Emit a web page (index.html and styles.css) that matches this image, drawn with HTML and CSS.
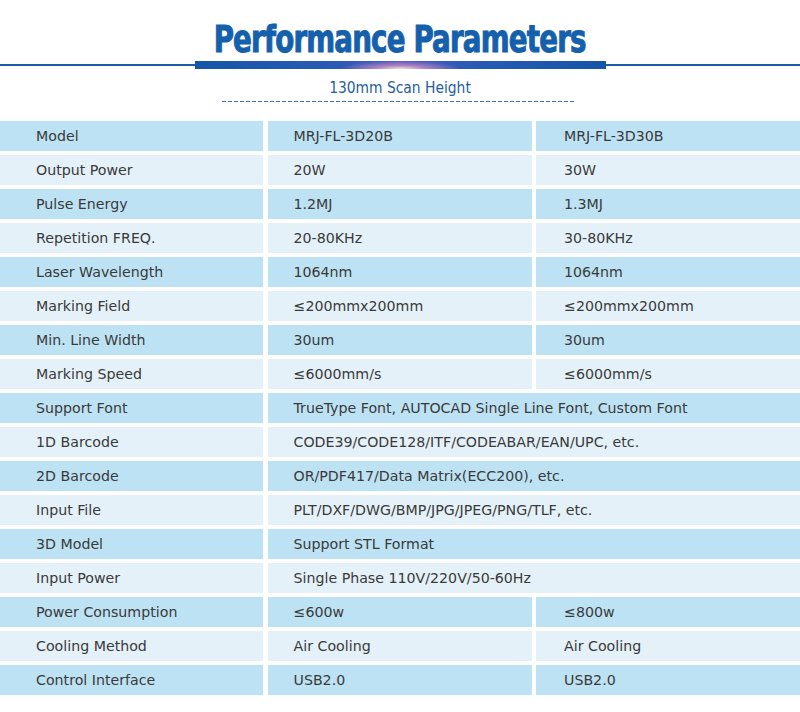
FILE: index.html
```html
<!DOCTYPE html>
<html>
<head>
<meta charset="utf-8">
<link rel="stylesheet" href="styles.css">
</head>
<body>
<div class="header">
  <h1 class="title"><span class="title-text">Performance Parameters</span></h1>
  <div class="rule">
    <div class="rule-line"></div>
    <div class="rule-bar"></div>
    <div class="rule-line"></div>
  </div>
  <div class="subtitle">130mm Scan Height</div>
  <div class="dashes"></div>
</div>
<div class="spec">
  <div class="row dark"><div class="cell label">Model</div><div class="cell">MRJ-FL-3D20B</div><div class="cell third">MRJ-FL-3D30B</div></div>
  <div class="row light"><div class="cell label">Output Power</div><div class="cell">20W</div><div class="cell third">30W</div></div>
  <div class="row dark"><div class="cell label">Pulse Energy</div><div class="cell">1.2MJ</div><div class="cell third">1.3MJ</div></div>
  <div class="row light"><div class="cell label">Repetition FREQ.</div><div class="cell">20-80KHz</div><div class="cell third">30-80KHz</div></div>
  <div class="row dark"><div class="cell label">Laser Wavelength</div><div class="cell">1064nm</div><div class="cell third">1064nm</div></div>
  <div class="row light"><div class="cell label">Marking Field</div><div class="cell">≤200mmx200mm</div><div class="cell third">≤200mmx200mm</div></div>
  <div class="row dark"><div class="cell label">Min. Line Width</div><div class="cell">30um</div><div class="cell third">30um</div></div>
  <div class="row light"><div class="cell label">Marking Speed</div><div class="cell">≤6000mm/s</div><div class="cell third">≤6000mm/s</div></div>
  <div class="row dark"><div class="cell label">Support Font</div><div class="cell span">TrueType Font, AUTOCAD Single Line Font, Custom Font</div></div>
  <div class="row light"><div class="cell label">1D Barcode</div><div class="cell span">CODE39/CODE128/ITF/CODEABAR/EAN/UPC, etc.</div></div>
  <div class="row dark"><div class="cell label">2D Barcode</div><div class="cell span">OR/PDF417/Data Matrix(ECC200), etc.</div></div>
  <div class="row light"><div class="cell label">Input File</div><div class="cell span">PLT/DXF/DWG/BMP/JPG/JPEG/PNG/TLF, etc.</div></div>
  <div class="row dark"><div class="cell label">3D Model</div><div class="cell span">Support STL Format</div></div>
  <div class="row light"><div class="cell label">Input Power</div><div class="cell span">Single Phase 110V/220V/50-60Hz</div></div>
  <div class="row dark"><div class="cell label">Power Consumption</div><div class="cell">≤600w</div><div class="cell third">≤800w</div></div>
  <div class="row light"><div class="cell label">Cooling Method</div><div class="cell">Air Cooling</div><div class="cell third">Air Cooling</div></div>
  <div class="row dark"><div class="cell label">Control Interface</div><div class="cell">USB2.0</div><div class="cell third">USB2.0</div></div>
</div>
</body>
</html>
```
FILE: styles.css
```css
* { box-sizing: border-box; }
html, body { margin: 0; padding: 0; background: #fff; }
body { width: 800px; font-family: "DejaVu Sans", Verdana, sans-serif; }

.header { height: 121px; padding-top: 18px; }
.title {
  margin: 0;
  height: 41px;
  text-align: center;
  font-family: "DejaVu Sans Condensed", "DejaVu Sans", sans-serif;
  font-stretch: condensed;
  font-weight: bold;
  font-size: 38px;
  line-height: 43px;
  color: #1560ad;
  letter-spacing: -1px;
  white-space: nowrap;
}
.title-text {
  display: inline-block;
  transform: scaleX(0.81);
  transform-origin: center;
  -webkit-text-stroke: 1px #1560ad;
}

.rule { display: flex; align-items: center; height: 9px; margin-top: 1px; }
.rule-line { flex: 1; height: 2px; background: #1a5fa8; }
.rule-bar {
  width: 411px; height: 8px;
  background:
    radial-gradient(ellipse 60px 8px at 50% 100%, rgba(255,230,200,0.95), rgba(230,150,200,0.6) 45%, rgba(120,100,200,0) 100%),
    linear-gradient(90deg, #1455a8 0%, #2a5cb4 35%, #5a5cc0 50%, #2a5cb4 65%, #1455a8 100%);
}
.subtitle {
  margin-top: 10px;
  text-align: center;
  font-family: "DejaVu Sans Condensed", "DejaVu Sans", sans-serif;
  font-size: 15.4px;
  line-height: 18px;
  color: #1f5d9f;
}
.dashes {
  width: 354px; height: 1px; margin: 4px 0 0 222px;
  background: repeating-linear-gradient(90deg, #3b73b3 0 4px, transparent 4px 6px);
}

.spec { display: flex; flex-direction: column; gap: 4px; }
.row {
  display: grid;
  grid-template-columns: 263px 264px 1fr;
  column-gap: 4.5px;
  height: 30px;
}
.cell {
  display: flex; align-items: center;
  padding-left: 26px;
  font-size: 14.2px;
  color: #3a3a3a;
  white-space: nowrap;
}
.cell.label { padding-left: 36px; }
.cell.third { padding-left: 28px; }
.cell.span { grid-column: 2 / 4; }
.dark .cell { background: #bde2f3; }
.light .cell { background: #e4f1f8; }
```
